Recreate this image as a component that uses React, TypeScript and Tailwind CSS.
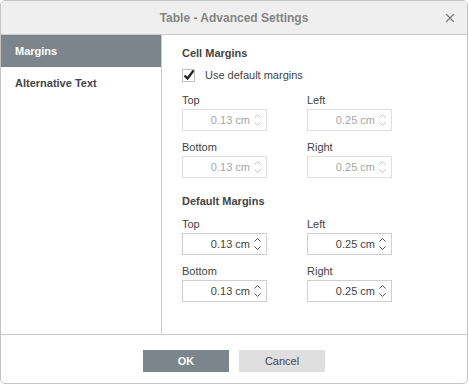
import { X } from "lucide-react";

function Spinner({ disabled }: { disabled?: boolean }) {
    const c = disabled ? "#c4c4c4" : "#555555";
    return (
        <div className="absolute right-[5px] top-0 h-full w-[7px] flex flex-col justify-between py-[4px]">
            <svg width="7" height="4" viewBox="0 0 7 4">
                <path d="M0.5 3.5 L3.5 0.5 L6.5 3.5" fill="none" stroke={c} strokeWidth="1" />
            </svg>
            <svg width="7" height="4" viewBox="0 0 7 4">
                <path d="M0.5 0.5 L3.5 3.5 L6.5 0.5" fill="none" stroke={c} strokeWidth="1" />
            </svg>
        </div>
    );
}

function SpinField({
    label,
    value,
    disabled,
    mt,
}: {
    label: string;
    value: string;
    disabled?: boolean;
    mt?: string;
}) {
    return (
        <div className={mt}>
            <div className="text-[11px] leading-[13px] text-[#444444]">{label}</div>
            <div
                className={`relative mt-[2px] w-[85px] h-[22px] border flex items-center justify-end pr-[16px] text-[11px] ${
                    disabled
                        ? "border-[#dedede] text-[#a6a6a6]"
                        : "border-[#cfcfcf] text-[#444444]"
                }`}
            >
                {value}
                <Spinner disabled={disabled} />
            </div>
        </div>
    );
}

function MarginGrid({ disabled }: { disabled?: boolean }) {
    return (
        <div className="grid grid-cols-[125px_125px]">
            <SpinField label="Top" value="0.13 cm" disabled={disabled} />
            <SpinField label="Left" value="0.25 cm" disabled={disabled} />
            <SpinField label="Bottom" value="0.13 cm" disabled={disabled} mt="mt-[10px]" />
            <SpinField label="Right" value="0.25 cm" disabled={disabled} mt="mt-[10px]" />
        </div>
    );
}

export default function App() {
    return (
        <div
            className="w-[469px] h-[385px] bg-white"
            style={{ fontFamily: '"Liberation Sans", Arial, sans-serif' }}
        >
            <div className="w-[468px] h-[384px] border border-[#c4c4c4] rounded-[5px] overflow-hidden flex flex-col bg-white">
                {/* Header */}
                <div className="relative h-[34px] flex-none bg-[#efefef] border-b border-[#cbcbcb] flex items-center justify-center">
                    <span className="text-[12px] font-bold text-[#848484]">
                        Table - Advanced Settings
                    </span>
                    <X
                        size={14}
                        strokeWidth={2}
                        className="absolute right-[10px] top-[10px] text-[#7a7a7a]"
                    />
                </div>

                {/* Body */}
                <div className="flex h-[300px] flex-none border-b border-[#cbcbcb]">
                    <div className="w-[161px] flex-none border-r border-[#cbcbcb]">
                        <div className="h-[32px] bg-[#7d858c] flex items-center pl-[14px] text-[11px] font-bold text-white">
                            Margins
                        </div>
                        <div className="h-[32px] flex items-center pl-[14px] text-[11px] font-bold text-[#444444]">
                            Alternative Text
                        </div>
                    </div>

                    <div className="flex-1 pl-[20px] pt-[12px]">
                        <div className="text-[11px] leading-[13px] font-bold text-[#444444]">
                            Cell Margins
                        </div>
                        <div className="mt-[9px] flex items-center gap-[10px]">
                            <div className="w-[13px] h-[13px] border border-[#c0c0c0] relative">
                                <svg
                                    width="14"
                                    height="14"
                                    viewBox="0 0 14 14"
                                    className="absolute left-[-1px] top-[-2px]"
                                >
                                    <path
                                        d="M2.5 7.5 L5.5 10.5 L11.5 2.5"
                                        fill="none"
                                        stroke="#222222"
                                        strokeWidth="2.2"
                                    />
                                </svg>
                            </div>
                            <span className="text-[11px] leading-[13px] text-[#444444]">
                                Use default margins
                            </span>
                        </div>
                        <div className="mt-[12px]">
                            <MarginGrid disabled />
                        </div>
                        <div className="mt-[17px] text-[11px] leading-[13px] font-bold text-[#444444]">
                            Default Margins
                        </div>
                        <div className="mt-[10px]">
                            <MarginGrid />
                        </div>
                    </div>
                </div>

                {/* Footer */}
                <div className="flex-1 flex items-start justify-center gap-[10px] pt-[15px]">
                    <button className="w-[86px] h-[22px] bg-[#7d858c] text-white text-[11px] font-bold">
                        OK
                    </button>
                    <button className="w-[86px] h-[22px] bg-[#dfdfdf] text-[#444444] text-[11px]">
                        Cancel
                    </button>
                </div>
            </div>
        </div>
    );
}
